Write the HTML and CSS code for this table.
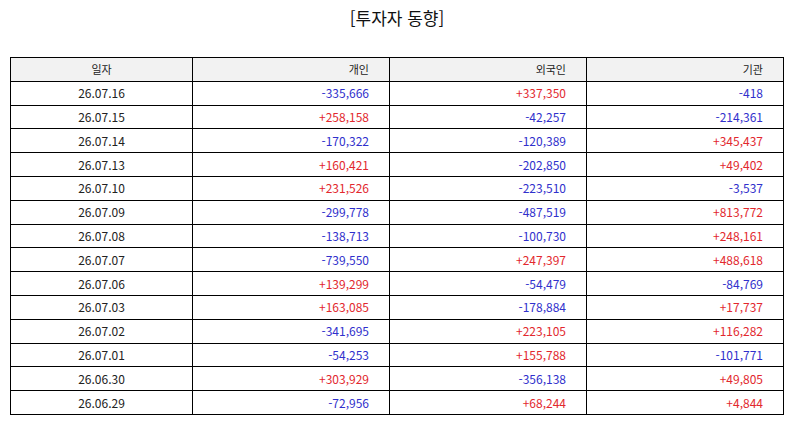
FILE: index.html
```html
<!DOCTYPE html>
<html lang="ko">
<head>
<meta charset="utf-8">
<link rel="stylesheet" href="styles.css">
</head>
<body>
<div class="page">
  <h1 class="title">[투자자 동향]</h1>
  <table class="grid">
    <colgroup>
      <col class="c-date"><col class="c-num"><col class="c-num"><col class="c-num">
    </colgroup>
    <thead>
      <tr><th class="center">일자</th><th>개인</th><th>외국인</th><th>기관</th></tr>
    </thead>
    <tbody>
      <tr><td class="center">26.07.16</td><td class="neg">-335,666</td><td class="pos">+337,350</td><td class="neg">-418</td></tr>
      <tr><td class="center">26.07.15</td><td class="pos">+258,158</td><td class="neg">-42,257</td><td class="neg">-214,361</td></tr>
      <tr><td class="center">26.07.14</td><td class="neg">-170,322</td><td class="neg">-120,389</td><td class="pos">+345,437</td></tr>
      <tr><td class="center">26.07.13</td><td class="pos">+160,421</td><td class="neg">-202,850</td><td class="pos">+49,402</td></tr>
      <tr><td class="center">26.07.10</td><td class="pos">+231,526</td><td class="neg">-223,510</td><td class="neg">-3,537</td></tr>
      <tr><td class="center">26.07.09</td><td class="neg">-299,778</td><td class="neg">-487,519</td><td class="pos">+813,772</td></tr>
      <tr><td class="center">26.07.08</td><td class="neg">-138,713</td><td class="neg">-100,730</td><td class="pos">+248,161</td></tr>
      <tr><td class="center">26.07.07</td><td class="neg">-739,550</td><td class="pos">+247,397</td><td class="pos">+488,618</td></tr>
      <tr><td class="center">26.07.06</td><td class="pos">+139,299</td><td class="neg">-54,479</td><td class="neg">-84,769</td></tr>
      <tr><td class="center">26.07.03</td><td class="pos">+163,085</td><td class="neg">-178,884</td><td class="pos">+17,737</td></tr>
      <tr><td class="center">26.07.02</td><td class="neg">-341,695</td><td class="pos">+223,105</td><td class="pos">+116,282</td></tr>
      <tr><td class="center">26.07.01</td><td class="neg">-54,253</td><td class="pos">+155,788</td><td class="neg">-101,771</td></tr>
      <tr><td class="center">26.06.30</td><td class="pos">+303,929</td><td class="neg">-356,138</td><td class="pos">+49,805</td></tr>
      <tr><td class="center">26.06.29</td><td class="neg">-72,956</td><td class="pos">+68,244</td><td class="pos">+4,844</td></tr>
    </tbody>
  </table>
</div>
</body>
</html>
```
FILE: styles.css
```css
html, body {
  margin: 0;
  padding: 0;
  background: #ffffff;
}
.page {
  width: 794px;
  padding: 6px 10px 0 10px;
  box-sizing: border-box;
  font-family: "Noto Sans CJK KR", "Noto Sans", "DejaVu Sans", sans-serif;
  color: #222222;
}
.title {
  margin: 0;
  height: 51px;
  font-size: 17px;
  font-weight: normal;
  line-height: 24px;
  text-align: center;
  color: #111111;
}
.grid {
  width: 774px;
  border-collapse: collapse;
  table-layout: fixed;
  font-size: 12px;
}
.c-date { width: 182px; }
.c-num { width: 197px; }
.grid th, .grid td {
  border: 1px solid #000000;
  height: 22.8px;
  padding: 0 20px 0 4px;
  text-align: right;
  font-weight: normal;
  line-height: 22px;
  white-space: nowrap;
}
.grid th {
  background: #f2f2f2;
  color: #222222;
  font-size: 11px;
}
.grid .center {
  text-align: center;
  padding: 0;
}
.neg { color: #3030cc; }
.pos { color: #e2282e; }
```
